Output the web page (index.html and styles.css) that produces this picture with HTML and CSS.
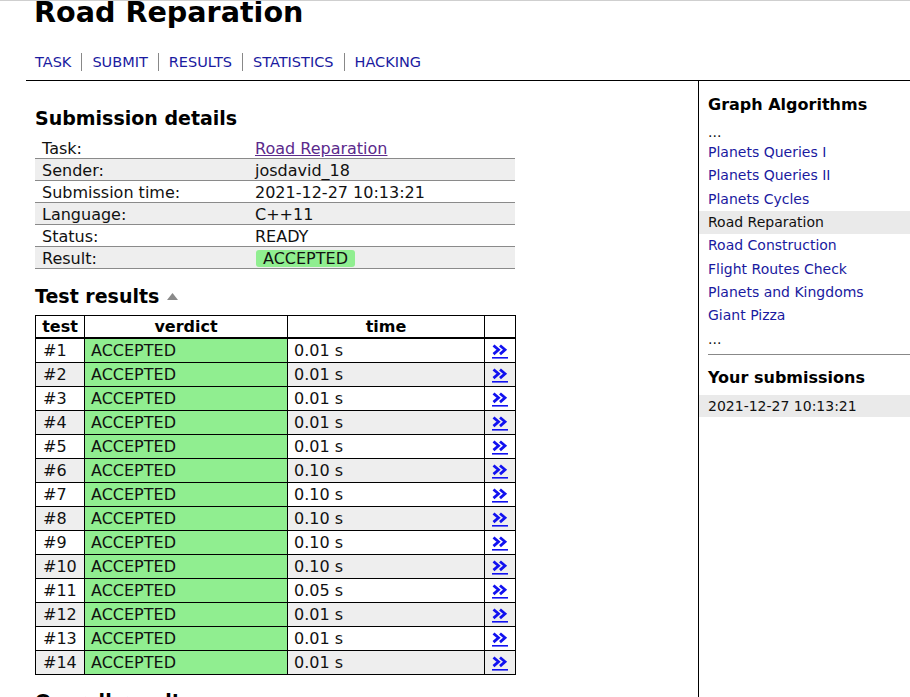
FILE: index.html
```html
<!DOCTYPE html>
<html lang="en">
<head>
<meta charset="utf-8">
<title>Road Reparation</title>
<link rel="stylesheet" href="styles.css">
</head>
<body>
<header class="header">
  <h1 class="title">Road Reparation</h1>
  <ul class="tabs">
    <li><a href="#">TASK</a></li>
    <li><a href="#">SUBMIT</a></li>
    <li><a href="#">RESULTS</a></li>
    <li><a href="#">STATISTICS</a></li>
    <li><a href="#">HACKING</a></li>
  </ul>
</header>
<div class="wrapper">
  <main class="main">
    <h2 class="sec">Submission details</h2>
    <table class="details">
      <colgroup><col class="c-key"><col class="c-val"></colgroup>
      <tbody>
        <tr><td>Task:</td><td><a class="visited" href="#">Road Reparation</a></td></tr>
        <tr><td>Sender:</td><td>josdavid_18</td></tr>
        <tr><td>Submission time:</td><td>2021-12-27 10:13:21</td></tr>
        <tr><td>Language:</td><td>C++11</td></tr>
        <tr><td>Status:</td><td>READY</td></tr>
        <tr><td>Result:</td><td><span class="badge">ACCEPTED</span></td></tr>
      </tbody>
    </table>
    <h2 class="sec sec-tests">Test results <svg class="caret" width="11" height="7" viewBox="0 0 11 7"><path d="M0 7 L5.5 0 L11 7 Z" fill="#8a8a8a"/></svg></h2>
    <table class="tests">
      <colgroup><col class="c-n"><col class="c-v"><col class="c-t"><col class="c-l"></colgroup>
      <thead>
        <tr><th>test</th><th>verdict</th><th>time</th><th></th></tr>
      </thead>
      <tbody>
        <tr><td class="n">#1</td><td class="ok">ACCEPTED</td><td>0.01 s</td><td class="l"><a class="more" href="#" aria-label="details"><svg width="16" height="15" viewBox="0 0 16 15"><path d="M1.5 1.5 L6.5 5.8 L1.5 10.1 M8 1.5 L13 5.8 L8 10.1" fill="none" stroke="#1212f0" stroke-width="2.8"/><rect x="0" y="13" width="16" height="1.6" fill="#1212f0"/></svg></a></td></tr>
        <tr><td class="n">#2</td><td class="ok">ACCEPTED</td><td>0.01 s</td><td class="l"><a class="more" href="#" aria-label="details"><svg width="16" height="15" viewBox="0 0 16 15"><path d="M1.5 1.5 L6.5 5.8 L1.5 10.1 M8 1.5 L13 5.8 L8 10.1" fill="none" stroke="#1212f0" stroke-width="2.8"/><rect x="0" y="13" width="16" height="1.6" fill="#1212f0"/></svg></a></td></tr>
        <tr><td class="n">#3</td><td class="ok">ACCEPTED</td><td>0.01 s</td><td class="l"><a class="more" href="#" aria-label="details"><svg width="16" height="15" viewBox="0 0 16 15"><path d="M1.5 1.5 L6.5 5.8 L1.5 10.1 M8 1.5 L13 5.8 L8 10.1" fill="none" stroke="#1212f0" stroke-width="2.8"/><rect x="0" y="13" width="16" height="1.6" fill="#1212f0"/></svg></a></td></tr>
        <tr><td class="n">#4</td><td class="ok">ACCEPTED</td><td>0.01 s</td><td class="l"><a class="more" href="#" aria-label="details"><svg width="16" height="15" viewBox="0 0 16 15"><path d="M1.5 1.5 L6.5 5.8 L1.5 10.1 M8 1.5 L13 5.8 L8 10.1" fill="none" stroke="#1212f0" stroke-width="2.8"/><rect x="0" y="13" width="16" height="1.6" fill="#1212f0"/></svg></a></td></tr>
        <tr><td class="n">#5</td><td class="ok">ACCEPTED</td><td>0.01 s</td><td class="l"><a class="more" href="#" aria-label="details"><svg width="16" height="15" viewBox="0 0 16 15"><path d="M1.5 1.5 L6.5 5.8 L1.5 10.1 M8 1.5 L13 5.8 L8 10.1" fill="none" stroke="#1212f0" stroke-width="2.8"/><rect x="0" y="13" width="16" height="1.6" fill="#1212f0"/></svg></a></td></tr>
        <tr><td class="n">#6</td><td class="ok">ACCEPTED</td><td>0.10 s</td><td class="l"><a class="more" href="#" aria-label="details"><svg width="16" height="15" viewBox="0 0 16 15"><path d="M1.5 1.5 L6.5 5.8 L1.5 10.1 M8 1.5 L13 5.8 L8 10.1" fill="none" stroke="#1212f0" stroke-width="2.8"/><rect x="0" y="13" width="16" height="1.6" fill="#1212f0"/></svg></a></td></tr>
        <tr><td class="n">#7</td><td class="ok">ACCEPTED</td><td>0.10 s</td><td class="l"><a class="more" href="#" aria-label="details"><svg width="16" height="15" viewBox="0 0 16 15"><path d="M1.5 1.5 L6.5 5.8 L1.5 10.1 M8 1.5 L13 5.8 L8 10.1" fill="none" stroke="#1212f0" stroke-width="2.8"/><rect x="0" y="13" width="16" height="1.6" fill="#1212f0"/></svg></a></td></tr>
        <tr><td class="n">#8</td><td class="ok">ACCEPTED</td><td>0.10 s</td><td class="l"><a class="more" href="#" aria-label="details"><svg width="16" height="15" viewBox="0 0 16 15"><path d="M1.5 1.5 L6.5 5.8 L1.5 10.1 M8 1.5 L13 5.8 L8 10.1" fill="none" stroke="#1212f0" stroke-width="2.8"/><rect x="0" y="13" width="16" height="1.6" fill="#1212f0"/></svg></a></td></tr>
        <tr><td class="n">#9</td><td class="ok">ACCEPTED</td><td>0.10 s</td><td class="l"><a class="more" href="#" aria-label="details"><svg width="16" height="15" viewBox="0 0 16 15"><path d="M1.5 1.5 L6.5 5.8 L1.5 10.1 M8 1.5 L13 5.8 L8 10.1" fill="none" stroke="#1212f0" stroke-width="2.8"/><rect x="0" y="13" width="16" height="1.6" fill="#1212f0"/></svg></a></td></tr>
        <tr><td class="n">#10</td><td class="ok">ACCEPTED</td><td>0.10 s</td><td class="l"><a class="more" href="#" aria-label="details"><svg width="16" height="15" viewBox="0 0 16 15"><path d="M1.5 1.5 L6.5 5.8 L1.5 10.1 M8 1.5 L13 5.8 L8 10.1" fill="none" stroke="#1212f0" stroke-width="2.8"/><rect x="0" y="13" width="16" height="1.6" fill="#1212f0"/></svg></a></td></tr>
        <tr><td class="n">#11</td><td class="ok">ACCEPTED</td><td>0.05 s</td><td class="l"><a class="more" href="#" aria-label="details"><svg width="16" height="15" viewBox="0 0 16 15"><path d="M1.5 1.5 L6.5 5.8 L1.5 10.1 M8 1.5 L13 5.8 L8 10.1" fill="none" stroke="#1212f0" stroke-width="2.8"/><rect x="0" y="13" width="16" height="1.6" fill="#1212f0"/></svg></a></td></tr>
        <tr><td class="n">#12</td><td class="ok">ACCEPTED</td><td>0.01 s</td><td class="l"><a class="more" href="#" aria-label="details"><svg width="16" height="15" viewBox="0 0 16 15"><path d="M1.5 1.5 L6.5 5.8 L1.5 10.1 M8 1.5 L13 5.8 L8 10.1" fill="none" stroke="#1212f0" stroke-width="2.8"/><rect x="0" y="13" width="16" height="1.6" fill="#1212f0"/></svg></a></td></tr>
        <tr><td class="n">#13</td><td class="ok">ACCEPTED</td><td>0.01 s</td><td class="l"><a class="more" href="#" aria-label="details"><svg width="16" height="15" viewBox="0 0 16 15"><path d="M1.5 1.5 L6.5 5.8 L1.5 10.1 M8 1.5 L13 5.8 L8 10.1" fill="none" stroke="#1212f0" stroke-width="2.8"/><rect x="0" y="13" width="16" height="1.6" fill="#1212f0"/></svg></a></td></tr>
        <tr><td class="n">#14</td><td class="ok">ACCEPTED</td><td>0.01 s</td><td class="l"><a class="more" href="#" aria-label="details"><svg width="16" height="15" viewBox="0 0 16 15"><path d="M1.5 1.5 L6.5 5.8 L1.5 10.1 M8 1.5 L13 5.8 L8 10.1" fill="none" stroke="#1212f0" stroke-width="2.8"/><rect x="0" y="13" width="16" height="1.6" fill="#1212f0"/></svg></a></td></tr>
      </tbody>
    </table>
    <h2 class="sec sec-overall">Overall result</h2>
  </main>
  <aside class="sidebar">
    <h3 class="side-h">Graph Algorithms</h3>
    <ul class="side-list">
      <li class="dots-top">...</li>
      <li><a href="#">Planets Queries I</a></li>
      <li><a href="#">Planets Queries II</a></li>
      <li><a href="#">Planets Cycles</a></li>
      <li class="cur">Road Reparation</li>
      <li><a href="#">Road Construction</a></li>
      <li><a href="#">Flight Routes Check</a></li>
      <li><a href="#">Planets and Kingdoms</a></li>
      <li><a href="#">Giant Pizza</a></li>
      <li>...</li>
    </ul>
    <div class="side-sep"></div>
    <h3 class="side-h side-h-sub">Your submissions</h3>
    <div class="sub-row">2021-12-27 10:13:21</div>
  </aside>
</div>
</body>
</html>
```

FILE: styles.css
```css
html, body {
  margin: 0;
  padding: 0;
  overflow: hidden;
}

body {
  font-family: "DejaVu Sans", Verdana, sans-serif;
  font-size: 16px;
  color: #111;
  background: #fff;
  border-top: 1px solid #cfcfcf;
}

.header {
  padding-left: 34px;
}

.title {
  margin: 0;
  font-size: 28.6px;
  line-height: 22px;
  font-weight: bold;
  color: #000;
}

.tabs {
  list-style: none;
  margin: 30px 0 0 1px;
  padding: 0;
  display: flex;
  font-size: 14.5px;
}

.tabs li {
  padding: 1px 10px 0;
  line-height: 17px;
  border-left: 1px solid #888;
}

.tabs li:first-child {
  padding-left: 0;
  border-left: none;
}

.tabs a {
  color: #1a1aa0;
  text-decoration: none;
}

.wrapper {
  margin: 9px 0 0 26px;
  border-top: 1px solid #000;
  display: flex;
}

.main {
  flex: 0 0 672px;
  box-sizing: border-box;
  padding: 25px 0 0 9px;
}

.sidebar {
  flex: 1;
  border-left: 1px solid #000;
  padding-top: 14px;
  min-height: 700px;
}

.sec {
  margin: 0 0 7px;
  font-size: 19px;
  line-height: 24px;
  font-weight: bold;
  color: #000;
}

.sec-tests {
  margin-bottom: 7px;
}

.sec-overall {
  margin-top: 14px;
}

.caret {
  margin-left: 1px;
  vertical-align: 3px;
}

.details {
  border-collapse: collapse;
  table-layout: fixed;
  width: 480px;
  margin-bottom: 15px;
}

.details col.c-key {
  width: 213px;
}

.details td {
  padding: 2px 7px 0;
  line-height: 19px;
  border-bottom: 1px solid #8a8a8a;
  white-space: nowrap;
}

.details tr:nth-child(even) td {
  background: #eee;
}

.visited {
  color: #5b2a8c;
  text-decoration: underline;
}

.badge {
  display: inline-block;
  margin-left: 1px;
  padding: 0 7px;
  line-height: 17px;
  background: #90ee90;
  border-radius: 3px;
}

.tests {
  border-collapse: collapse;
  table-layout: fixed;
  width: 480px;
  border: 1px solid #000;
}

.tests col.c-n { width: 49px; }
.tests col.c-v { width: 203px; }
.tests col.c-t { width: 197px; }
.tests col.c-l { width: 31px; }

.tests th,
.tests td {
  border: 1px solid #000;
  padding: 0 6px;
  white-space: nowrap;
}

.tests th {
  line-height: 21px;
  border-bottom: 2px solid #000;
  font-weight: bold;
  text-align: center;
  color: #000;
  background: #fff;
}

.tests td {
  line-height: 23px;
}

.tests tbody tr:nth-child(even) td {
  background: #eee;
}

.tests tbody tr td.ok {
  background: #90ee90;
}

.tests td.n {
  padding-left: 7px;
}

.tests td.l {
  text-align: center;
  padding: 0;
}

.more {
  display: inline-block;
  line-height: 0;
  vertical-align: middle;
}

.more svg {
  display: block;
}

.side-h {
  margin: 0 0 9px;
  padding-left: 9px;
  font-size: 16px;
  line-height: 20px;
  font-weight: bold;
  color: #000;
}

.side-list {
  list-style: none;
  margin: 0;
  padding: 0;
  font-size: 14px;
}

.side-list li {
  padding-left: 9px;
  line-height: 23.33px;
}

.side-list li.dots-top {
  line-height: 17px;
}

.side-list li.cur {
  background: #eaeaea;
}

.side-list a {
  color: #1a1aa0;
  text-decoration: none;
}

.side-sep {
  margin: 3px 0 0 9px;
  border-top: 1px solid #888;
}

.side-h-sub {
  margin-top: 13px;
  margin-bottom: 7px;
}

.sub-row {
  padding-left: 9px;
  line-height: 22px;
  font-size: 14px;
  background: #eaeaea;
}
```
